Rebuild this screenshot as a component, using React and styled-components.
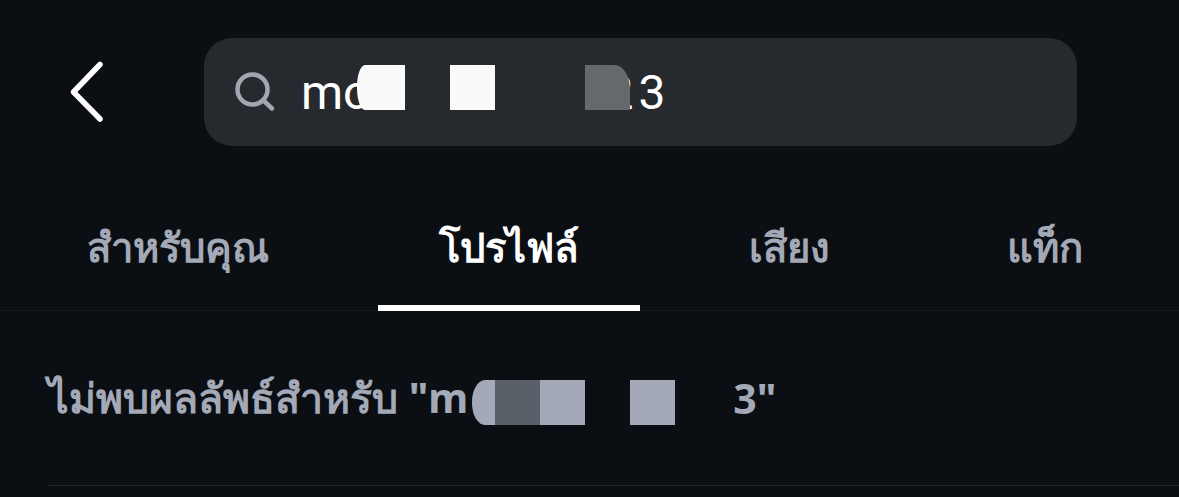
import React from "react";
import styled, { createGlobalStyle } from "styled-components";

const GlobalStyle = createGlobalStyle`
  html, body {
    margin: 0;
    height: 100%;
    background: #0b0f14;
    overflow: hidden;
  }
`;

const Page = styled.div`
  width: 1179px;
  height: 497px;
  display: flex;
  flex-direction: column;
  background: #0b0f14;
  font-family: "Noto Sans", "Roboto", "Liberation Sans", sans-serif;
`;

const Header = styled.header`
  display: flex;
  align-items: center;
  height: 108px;
  margin-top: 38px;
  padding-left: 68px;
`;

const BackButton = styled.button`
  display: flex;
  width: 136px;
  padding: 0;
  border: none;
  background: none;
`;

const SearchBar = styled.div`
  display: flex;
  align-items: center;
  width: 873px;
  height: 108px;
  padding-left: 30px;
  box-sizing: border-box;
  border-radius: 28px;
  background: #26292e;
`;

const SearchText = styled.div`
  display: flex;
  align-items: center;
  margin-left: 23px;
  padding-top: 2px;
  color: #fff;
  font-family: "Roboto", sans-serif;
  font-size: 48px;
  line-height: 56px;
`;

// the blocks that hide part of the query, they sit on top of the letters
const Mask = styled.span`
  position: relative;
  z-index: 1;
  display: block;
  flex: none;
  width: ${(p) => p.$w}px;
  height: 45px;
  margin-left: ${(p) => p.$gap}px;
  margin-bottom: ${(p) => p.$lift}px;
  background: ${(p) => p.$color};
  border-radius: ${(p) => p.$radius || "0"};
`;

const Tail = styled.span`
  margin-left: ${(p) => p.$gap}px;
  letter-spacing: ${(p) => p.$track || 0}px;
  white-space: pre;
`;

const Tabs = styled.nav`
  display: flex;
  height: 165px;
  box-sizing: border-box;
  padding-left: 27px;
  gap: 49px;
  border-bottom: 1px solid #14181d;
`;

const Tab = styled.div`
  display: flex;
  justify-content: center;
  height: 165px;
  box-sizing: border-box;
  width: ${(p) => p.$w}px;
  padding-top: 71px;
  color: ${(p) => (p.$active ? "#fff" : "#a3a9b6")};
  font-size: 40px;
  font-weight: 700;
  line-height: 60px;
  border-bottom: ${(p) => (p.$active ? "6px solid #fff" : "none")};
`;

const Result = styled.div`
  display: flex;
  align-items: center;
  height: 175px;
  margin-left: 48px;
  box-sizing: border-box;
  border-bottom: 1px solid #23272c;
  color: #a3a9b6;
  font-size: 41px;
  font-weight: 700;
`;

const ResultText = styled.span`
  white-space: pre;
`;

export default function App() {
  return (
    <Page>
      <GlobalStyle />
      <Header>
        <BackButton aria-label="back">
          <svg width="38" height="62" viewBox="0 0 38 62" fill="none">
            <path d="M32 3.5 L5.5 31 L32 58" stroke="#fff" strokeWidth="5.5" strokeLinecap="round" strokeLinejoin="round" />
          </svg>
        </BackButton>
        <SearchBar>
          <svg width="44" height="44" viewBox="0 0 44 44" fill="none">
            <circle cx="18.5" cy="19.5" r="15" stroke="#a0a6b2" strokeWidth="4.5" />
            <path d="M29 30 L38 38.5" stroke="#a0a6b2" strokeWidth="4.5" strokeLinecap="round" />
          </svg>
          <SearchText>
            mo
            <Mask $w={48} $gap={-13} $lift={12} $color="#fafafa" $radius="8px 0 0 8px / 22px 0 0 22px" />
            <Mask $w={45} $gap={45} $lift={12} $color="#fafafa" />
            <Mask $w={45} $gap={90} $lift={12} $color="#65686d" $radius="0 15px 0 0 / 0 25px 0 0" />
            <Tail $gap={-24} $track={5}>23</Tail>
          </SearchText>
        </SearchBar>
      </Header>
      <Tabs>
        <Tab $w={302}>สำหรับคุณ</Tab>
        <Tab $w={262} $active>โปรไฟล์</Tab>
        <Tab $w={200}>เสียง</Tab>
        <Tab $w={213}>แท็ก</Tab>
      </Tabs>
      <Result>
        <ResultText>ไม่พบผลลัพธ์สำหรับ "m</ResultText>
        <Mask $w={23} $gap={4} $lift={-8} $color="#a3a9b6" $radius="13px 0 0 13px / 22px 0 0 22px" />
        <Mask $w={45} $gap={0} $lift={-8} $color="#5a6068" />
        <Mask $w={45} $gap={0} $lift={-8} $color="#a3a9b6" />
        <Mask $w={45} $gap={45} $lift={-8} $color="#a3a9b6" />
        <Tail $gap={58}>3"</Tail>
      </Result>
    </Page>
  );
}
